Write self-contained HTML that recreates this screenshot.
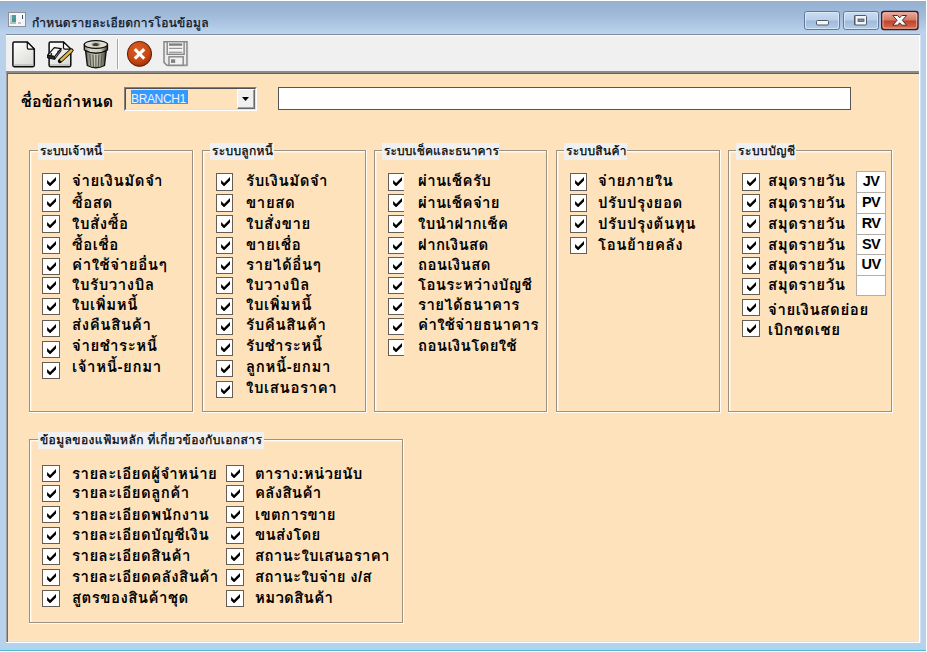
<!DOCTYPE html>
<html lang="th"><head><meta charset="utf-8"><title>กำหนดรายละเอียดการโอนข้อมูล</title>
<style>
html,body{margin:0;padding:0;}
body{width:927px;height:652px;overflow:hidden;background:#fff;position:relative;font-family:'Liberation Sans','Loma','Garuda','Waree','Noto Sans Thai UI','Noto Sans Thai','Tahoma','Leelawadee UI',sans-serif;color:#000;}
.abs{position:absolute;}
#frame{left:0;top:1px;width:926px;height:650px;background:linear-gradient(#b9d1ea 0,#b9d1ea 642px,#b9d1ea 644px,#a4d8f2 648px,#8fe0f8 649px,#52b6cf 649px,#52b6cf 650px);}
#tbar{left:0;top:1px;width:926px;height:33px;background:linear-gradient(#99aec9 0,#96b2d3 9%,#a1bbda 45%,#aec6e3 70%,#b6d0ea 90%,#bed4ec 100%);}
#title{left:32px;top:13px;font-size:12px;line-height:20px;white-space:nowrap;color:#0a1020;letter-spacing:.25px;-webkit-text-stroke:.25px #0a1020;}
#tool{left:6px;top:35px;width:914px;height:36px;background:#f0f0f0;box-shadow:inset 0 1px 0 #fbfbfb;}
#tline0{left:6px;top:34px;width:914px;height:1px;background:#7f8ea3;}
#tline1{left:6px;top:71px;width:914px;height:2px;background:#8c8c8c;}
#tline2{left:7px;top:73px;width:912px;height:1px;background:#6a5f52;}
#content{left:8px;top:74px;width:911px;height:567px;background:#fde2bc;}
#cl1{left:6px;top:73px;width:1px;height:570px;background:#a0a0a0;}
#cl2{left:7px;top:74px;width:1px;height:568px;background:#6e6a64;}
#cr0{left:918px;top:74px;width:1px;height:568px;background:#eee4d4;}
#cr{left:919px;top:35px;width:1px;height:608px;background:#fff;}
#cr2{left:920px;top:35px;width:1px;height:608px;background:#d3e2f3;}
#cb0{left:8px;top:640px;width:910px;height:1px;background:#f3e4cb;}
#cb{left:8px;top:641px;width:911px;height:1px;background:#e9e0d2;}
#cb2{left:6px;top:642px;width:914px;height:1px;background:#fff;}
#cyan{left:0;top:650px;width:926px;height:1px;background:#52b6cf;}
.grp{box-sizing:border-box;border:1px solid #fffdf6;border-width:0 1px 1px 0;}
.grp:before{content:'';position:absolute;left:0;top:0;right:0;bottom:0;border:1px solid #9c9080;box-shadow:inset 1px 1px 0 #fffdf6,inset 2px 2px 0 #feecd4;}
.gt{background:#f0f0f0;font-size:12px;line-height:17px;height:17px;white-space:nowrap;padding:0 0 0 2px;box-sizing:border-box;overflow:hidden;-webkit-text-stroke:.25px #000;}
.cb{box-sizing:border-box;border:1px solid #665e54;background:#fff;}
.cb .ck{position:absolute;left:4px;top:3px;}
.lb{font-weight:bold;font-size:15px;line-height:22px;height:22px;white-space:nowrap;letter-spacing:.6px;}
.tx{background:#fff;border:1px solid #555;box-sizing:border-box;}
.jv{background:#fff;border:1px solid #b4aea4;box-sizing:border-box;font-weight:bold;font-size:14.500px;letter-spacing:-.6px;text-align:center;}
</style></head>
<body>
<div id="frame" class="abs"></div>
<div id="tbar" class="abs"></div>
<svg class="abs" style="left:8px;top:12px" width="18" height="15" viewBox="0 0 18 15">
<rect x="0.5" y="0.5" width="17" height="14" fill="#f4f6f8" stroke="#8a9098"/>
<rect x="2" y="3" width="2" height="9" fill="#c8d0d4"/>
<rect x="4" y="3" width="4" height="4" fill="#4e9aa6"/>
<rect x="4" y="7" width="4" height="3" fill="#3f9f7c"/>
<rect x="2" y="10" width="6" height="2" fill="#b9bdbd"/>
<rect x="10" y="10" width="3" height="2" fill="#c4c4c0"/>
<rect x="14" y="3" width="1" height="4" fill="#3a4a6a"/>
</svg>
<div id="title" class="abs">กำหนดรายละเอียดการโอนข้อมูล</div>
<svg class="abs" style="left:800px;top:8px" width="122" height="25" viewBox="0 0 122 25">
<defs>
<linearGradient id="gb" x1="0" y1="0" x2="0" y2="1"><stop offset="0" stop-color="#cbddf2"/><stop offset=".48" stop-color="#b9d0ea"/><stop offset=".52" stop-color="#9dbbdc"/><stop offset="1" stop-color="#b4cdea"/></linearGradient>
<linearGradient id="gr" x1="0" y1="0" x2="0" y2="1"><stop offset="0" stop-color="#eab0a2"/><stop offset=".48" stop-color="#d77863"/><stop offset=".52" stop-color="#c0402a"/><stop offset="1" stop-color="#d67352"/></linearGradient>
</defs>
<rect x="4.500" y="3.500" width="35" height="18" rx="2.200" fill="url(#gb)" stroke="#62799a"/>
<rect x="5.500" y="4.500" width="33" height="16" rx="2" fill="none" stroke="#e4eef9" stroke-opacity=".7"/>
<rect x="16.500" y="12.500" width="12" height="4.500" rx="1" fill="#f4f6f9" stroke="#4f5a6b"/>
<rect x="43.500" y="3.500" width="35" height="18" rx="2.200" fill="url(#gb)" stroke="#62799a"/>
<rect x="44.500" y="4.500" width="33" height="16" rx="2" fill="none" stroke="#e4eef9" stroke-opacity=".7"/>
<rect x="54.500" y="7.500" width="12" height="9.500" rx="1" fill="#f4f6f9" stroke="#4f5a6b"/>
<rect x="54" y="7.500" width="1.500" height="9.500" fill="#4f5a6b"/>
<rect x="58" y="11" width="6" height="2.500" fill="#7f8da3" stroke="#4f5a6b" stroke-width=".8"/>
<rect x="81.700" y="3.500" width="36.300" height="18" rx="2.200" fill="url(#gr)" stroke="#3e1716" stroke-width="1.300"/>
<rect x="83" y="4.800" width="33.700" height="15.400" rx="2" fill="none" stroke="#f6c6bb" stroke-opacity=".75"/>
<path d="M92.800 7.500 L97.600 7.500 L99.700 9.800 L101.800 7.500 L106.600 7.500 L102.300 12.300 L106.600 17.200 L101.800 17.200 L99.700 14.800 L97.600 17.200 L92.800 17.200 L97.100 12.300 Z" fill="#fafafa" stroke="#4a3030" stroke-width="1" stroke-linejoin="round"/>
</svg>
<div id="tline0" class="abs"></div>
<div id="tool" class="abs"></div>
<svg class="abs" style="left:11px;top:39.500px" width="26" height="29" viewBox="0 0 26 29">
<defs><linearGradient id="gd" x1="0" y1="0" x2=".7" y2="1"><stop offset="0" stop-color="#ffffff"/><stop offset="1" stop-color="#dcdcd8"/></linearGradient></defs>
<path d="M1.900 3.500 Q1.900 2.100 3.300 2.100 L16.300 2.100 L23.300 9.100 L23.300 25.300 Q23.300 26.700 21.900 26.700 L3.300 26.700 Q1.900 26.700 1.900 25.300 Z" fill="url(#gd)" stroke="#0c0c0c" stroke-width="1.500" stroke-linejoin="round"/>
<path d="M2.800 24.300 H22.400 V25.800 H2.800 Z" fill="#b9b9b6"/>
<path d="M16.300 2.100 L16.300 7.700 Q16.300 9.100 17.700 9.100 L23.300 9.100 Z" fill="#fbfbfb" stroke="#0c0c0c" stroke-width="1.200" stroke-linejoin="round"/>
</svg>
<svg class="abs" style="left:46px;top:39.500px" width="30" height="29" viewBox="0 0 30 29">
<path d="M3.100 3.500 Q3.100 2.100 4.500 2.100 L17.500 2.100 L24.800 9.100 L24.800 25.300 Q24.800 26.700 23.400 26.700 L4.500 26.700 Q3.100 26.700 3.100 25.300 Z" fill="url(#gd)" stroke="#0c0c0c" stroke-width="1.500" stroke-linejoin="round"/>
<path d="M4 24.300 H23.900 V25.800 H4 Z" fill="#b9b9b6"/>
<path d="M17.500 2.100 L17.500 7.700 Q17.500 9.100 18.900 9.100 L24.800 9.100 Z" fill="#fbfbfb" stroke="#0c0c0c" stroke-width="1.200" stroke-linejoin="round"/>
<path d="M1.600 15.200 L8.300 7.700 L15 8.700 L8.700 16.600 Z" fill="#f6f6f6" stroke="#0c0c0c" stroke-width="1.200" stroke-linejoin="round"/>
<path d="M1.600 15.200 L8.700 16.600 L8.700 19.300 L1.600 18 Z" fill="#2a2a2a" stroke="#0c0c0c" stroke-width="1" stroke-linejoin="round"/>
<path d="M8.700 16.600 L15 8.700 L15 11 L8.700 19.300 Z" fill="#8c8c8c" stroke="#0c0c0c" stroke-width="1" stroke-linejoin="round"/>
<circle cx="5.300" cy="14" r=".9" fill="#111"/><circle cx="12.300" cy="11.300" r=".9" fill="#111"/>
<path d="M14 21 L25.400 10.500" stroke="#0c0c0c" stroke-width="4.400" stroke-linecap="round"/>
<path d="M15.200 20 L25.400 10.500" stroke="#dfb645" stroke-width="2.400" stroke-linecap="round"/>
<circle cx="13.600" cy="21.500" r="1.100" fill="#0c0c0c"/>
</svg>
<svg class="abs" style="left:82.500px;top:39px" width="28" height="30" viewBox="0 0 28 30">
<defs><linearGradient id="gt" x1="0" y1="0" x2="1" y2="0"><stop offset="0" stop-color="#4e4e46"/><stop offset=".2" stop-color="#a9a99b"/><stop offset=".5" stop-color="#d0d0c0"/><stop offset=".8" stop-color="#8d8d80"/><stop offset="1" stop-color="#2c2c28"/></linearGradient>
<linearGradient id="gl" x1="0" y1="0" x2="1" y2="0"><stop offset="0" stop-color="#8a8a7c"/><stop offset=".25" stop-color="#d9d9cb"/><stop offset=".7" stop-color="#cdcdbd"/><stop offset="1" stop-color="#3a3a34"/></linearGradient></defs>
<path d="M2.600 12 L4.300 26.500 Q12.900 31 21.500 26.500 L23.200 12 Z" fill="url(#gt)" stroke="#0e0e0c" stroke-width="1.300" stroke-linejoin="round"/>
<g stroke="#5c5c52" stroke-width="1.200"><path d="M6.800 15 L7.800 27.500"/><path d="M9.900 15.500 L10.500 28.300"/><path d="M12.900 15.800 L12.900 28.600"/><path d="M15.900 15.500 L15.300 28.300"/><path d="M19 15 L18 27.500"/></g>
<path d="M1.300 5.500 L1.300 11 Q12.900 17.500 24.500 11 L24.500 5.500 Z" fill="url(#gl)" stroke="#0e0e0c" stroke-width="1.300" stroke-linejoin="round"/>
<ellipse cx="12.900" cy="5.500" rx="11.600" ry="3.900" fill="#dedfd1" stroke="#0e0e0c" stroke-width="1.200"/>
<ellipse cx="12.900" cy="5.400" rx="4.600" ry="2.100" fill="#b3b3a4"/>
<ellipse cx="12.600" cy="5.600" rx="3" ry="1.500" fill="#3c3c34"/>
</svg>
<div class="abs" style="left:117px;top:39px;width:1px;height:30px;background:#a8a8a8"></div><div class="abs" style="left:118px;top:39px;width:1px;height:30px;background:#fff"></div>
<svg class="abs" style="left:126px;top:40px" width="28" height="28" viewBox="0 0 28 28">
<defs><radialGradient id="gx" cx=".42" cy=".32" r=".75"><stop offset="0" stop-color="#dd5f22"/><stop offset=".65" stop-color="#c64612"/><stop offset="1" stop-color="#8a2a0a"/></radialGradient></defs>
<ellipse cx="13.500" cy="13.900" rx="12.100" ry="12.500" fill="url(#gx)" stroke="#5e1c08" stroke-width="1"/>
<path d="M9.900 10.300 L17.100 17.500 M17.100 10.300 L9.900 17.500" stroke="#fff" stroke-width="3.100" stroke-linecap="square"/>
</svg>
<svg class="abs" style="left:163px;top:40px" width="26" height="27" viewBox="0 0 26 27">
<path d="M1 1.700 L24 1.700 L24 25.200 L3.800 25.200 L1 22.400 Z" fill="#ececec" stroke="#868686" stroke-width="1.500" stroke-linejoin="miter"/>
<path d="M24.600 2.500 V25.800 H4.500" fill="none" stroke="#a6a6a6" stroke-width="1"/>
<rect x="4.200" y="1.700" width="16.900" height="12.600" fill="#f4f4f4" stroke="#868686" stroke-width="1.400"/>
<rect x="6" y="3.400" width="13.200" height="2.400" fill="#808080"/>
<rect x="6" y="7.800" width="13.200" height="1.100" fill="#8c8c8c"/>
<rect x="6" y="11.700" width="13.200" height="1.100" fill="#8c8c8c"/>
<rect x="6" y="16.800" width="14.200" height="8.400" fill="#f2f2f2" stroke="#868686" stroke-width="1.400"/>
<rect x="8" y="19.300" width="4.200" height="3.600" fill="#808080"/>
</svg>
<div id="tline1" class="abs"></div><div id="tline2" class="abs"></div>
<div id="content" class="abs"></div>
<div id="cl1" class="abs"></div><div id="cl2" class="abs"></div><div id="cr" class="abs"></div><div id="cb0" class="abs"></div><div id="cb" class="abs"></div><div id="cb2" class="abs"></div><div id="cr2" class="abs"></div><div id="cr0" class="abs"></div><div id="cyan" class="abs"></div>
<div class="abs lb" style="left:21px;top:91px;font-size:16px;letter-spacing:.1px">ชื่อข้อกำหนด</div>
<div class="abs" style="left:124px;top:87px;width:133px;height:24px;box-sizing:border-box;border:1px solid;border-color:#808080 #fff #fff #808080;"></div>
<div class="abs" style="left:125px;top:88px;width:131px;height:22px;box-sizing:border-box;border:1px solid;border-color:#505050 #ece2d2 #ece2d2 #505050;"></div>
<div class="abs" style="left:131px;top:90px;width:57px;height:14px;background:#3399ff;color:#eaf3ff;font-size:12px;line-height:19px;white-space:nowrap;letter-spacing:-.35px;overflow:hidden;">BRANCH1</div>
<div class="abs" style="left:237px;top:89px;width:18px;height:20px;box-sizing:border-box;background:#f0f0f0;border:1px solid;border-color:#fff #696969 #696969 #fff;box-shadow:inset -1px -1px 0 #a0a0a0;"></div>
<svg class="abs" style="left:242px;top:97px" width="8" height="5" viewBox="0 0 8 5"><path d="M0 0 H7 L3.500 4 Z" fill="#000"/></svg>
<div class="abs tx" style="left:278px;top:87px;width:573px;height:23px"></div>
<div class="abs grp" style="left:29px;top:150px;width:165px;height:263px"></div>
<div class="abs gt" style="left:38px;top:143px;width:66px;letter-spacing:0px">ระบบเจ้าหนี้</div>
<div class="abs grp" style="left:202px;top:150px;width:165px;height:263px"></div>
<div class="abs gt" style="left:210px;top:143px;width:64px;letter-spacing:0.3px">ระบบลูกหนี้</div>
<div class="abs grp" style="left:374px;top:150px;width:174px;height:263px"></div>
<div class="abs gt" style="left:382px;top:143px;width:117px;letter-spacing:0.1px">ระบบเช็คและธนาคาร</div>
<div class="abs grp" style="left:556px;top:150px;width:165px;height:263px"></div>
<div class="abs gt" style="left:564px;top:143px;width:63px;letter-spacing:0.3px">ระบบสินค้า</div>
<div class="abs grp" style="left:728px;top:150px;width:165px;height:263px"></div>
<div class="abs gt" style="left:736px;top:143px;width:60px;letter-spacing:0.5px">ระบบบัญชี</div>
<div class="abs grp" style="left:29px;top:439px;width:375px;height:185px"></div>
<div class="abs gt" style="left:38px;top:432px;width:226px;letter-spacing:0.4px">ข้อมูลของแฟ้มหลัก ที่เกี่ยวข้องกับเอกสาร</div>
<div class="abs cb" style="left:42px;top:173px;width:18px;height:18px;"><svg class="ck" width="9.200" height="9" viewBox="0 0 7 7"><path d="M0 2.300 L2.300 4.600 L7 0 L7 2.700 L2.300 7.300 L0 5 Z" fill="#000"/></svg></div>
<div class="abs lb" style="left:72px;top:170px;">จ่ายเงินมัดจำ</div>
<div class="abs cb" style="left:42px;top:194px;width:18px;height:18px;"><svg class="ck" width="9.200" height="9" viewBox="0 0 7 7"><path d="M0 2.300 L2.300 4.600 L7 0 L7 2.700 L2.300 7.300 L0 5 Z" fill="#000"/></svg></div>
<div class="abs lb" style="left:72px;top:192px;">ซื้อสด</div>
<div class="abs cb" style="left:42px;top:215px;width:18px;height:18px;"><svg class="ck" width="9.200" height="9" viewBox="0 0 7 7"><path d="M0 2.300 L2.300 4.600 L7 0 L7 2.700 L2.300 7.300 L0 5 Z" fill="#000"/></svg></div>
<div class="abs lb" style="left:72px;top:213px;">ใบสั่งซื้อ</div>
<div class="abs cb" style="left:42px;top:237px;width:18px;height:17px;"><svg class="ck" width="9.200" height="9" viewBox="0 0 7 7"><path d="M0 2.300 L2.300 4.600 L7 0 L7 2.700 L2.300 7.300 L0 5 Z" fill="#000"/></svg></div>
<div class="abs lb" style="left:72px;top:234px;">ซื้อเชื่อ</div>
<div class="abs cb" style="left:42px;top:258px;width:18px;height:17px;"><svg class="ck" width="9.200" height="9" viewBox="0 0 7 7"><path d="M0 2.300 L2.300 4.600 L7 0 L7 2.700 L2.300 7.300 L0 5 Z" fill="#000"/></svg></div>
<div class="abs lb" style="left:72px;top:254px;">ค่าใช้จ่ายอื่นๆ</div>
<div class="abs cb" style="left:42px;top:277px;width:18px;height:17px;"><svg class="ck" width="9.200" height="9" viewBox="0 0 7 7"><path d="M0 2.300 L2.300 4.600 L7 0 L7 2.700 L2.300 7.300 L0 5 Z" fill="#000"/></svg></div>
<div class="abs lb" style="left:72px;top:274px;">ใบรับวางบิล</div>
<div class="abs cb" style="left:42px;top:298px;width:18px;height:17px;"><svg class="ck" width="9.200" height="9" viewBox="0 0 7 7"><path d="M0 2.300 L2.300 4.600 L7 0 L7 2.700 L2.300 7.300 L0 5 Z" fill="#000"/></svg></div>
<div class="abs lb" style="left:72px;top:294px;">ใบเพิ่มหนี้</div>
<div class="abs cb" style="left:42px;top:320px;width:18px;height:17px;"><svg class="ck" width="9.200" height="9" viewBox="0 0 7 7"><path d="M0 2.300 L2.300 4.600 L7 0 L7 2.700 L2.300 7.300 L0 5 Z" fill="#000"/></svg></div>
<div class="abs lb" style="left:72px;top:314px;">ส่งคืนสินค้า</div>
<div class="abs cb" style="left:42px;top:341px;width:18px;height:17px;"><svg class="ck" width="9.200" height="9" viewBox="0 0 7 7"><path d="M0 2.300 L2.300 4.600 L7 0 L7 2.700 L2.300 7.300 L0 5 Z" fill="#000"/></svg></div>
<div class="abs lb" style="left:72px;top:335px;">จ่ายชำระหนี้</div>
<div class="abs cb" style="left:42px;top:362px;width:18px;height:17px;"><svg class="ck" width="9.200" height="9" viewBox="0 0 7 7"><path d="M0 2.300 L2.300 4.600 L7 0 L7 2.700 L2.300 7.300 L0 5 Z" fill="#000"/></svg></div>
<div class="abs lb" style="left:72px;top:356px;">เจ้าหนี้-ยกมา</div>
<div class="abs cb" style="left:216px;top:173px;width:17px;height:18px;"><svg class="ck" width="9.200" height="9" viewBox="0 0 7 7"><path d="M0 2.300 L2.300 4.600 L7 0 L7 2.700 L2.300 7.300 L0 5 Z" fill="#000"/></svg></div>
<div class="abs lb" style="left:246px;top:170px;">รับเงินมัดจำ</div>
<div class="abs cb" style="left:216px;top:194px;width:17px;height:18px;"><svg class="ck" width="9.200" height="9" viewBox="0 0 7 7"><path d="M0 2.300 L2.300 4.600 L7 0 L7 2.700 L2.300 7.300 L0 5 Z" fill="#000"/></svg></div>
<div class="abs lb" style="left:246px;top:192px;">ขายสด</div>
<div class="abs cb" style="left:216px;top:215px;width:17px;height:18px;"><svg class="ck" width="9.200" height="9" viewBox="0 0 7 7"><path d="M0 2.300 L2.300 4.600 L7 0 L7 2.700 L2.300 7.300 L0 5 Z" fill="#000"/></svg></div>
<div class="abs lb" style="left:246px;top:213px;">ใบสั่งขาย</div>
<div class="abs cb" style="left:216px;top:237px;width:17px;height:17px;"><svg class="ck" width="9.200" height="9" viewBox="0 0 7 7"><path d="M0 2.300 L2.300 4.600 L7 0 L7 2.700 L2.300 7.300 L0 5 Z" fill="#000"/></svg></div>
<div class="abs lb" style="left:246px;top:234px;">ขายเชื่อ</div>
<div class="abs cb" style="left:216px;top:257px;width:17px;height:17px;"><svg class="ck" width="9.200" height="9" viewBox="0 0 7 7"><path d="M0 2.300 L2.300 4.600 L7 0 L7 2.700 L2.300 7.300 L0 5 Z" fill="#000"/></svg></div>
<div class="abs lb" style="left:246px;top:254px;">รายได้อื่นๆ</div>
<div class="abs cb" style="left:216px;top:277px;width:17px;height:17px;"><svg class="ck" width="9.200" height="9" viewBox="0 0 7 7"><path d="M0 2.300 L2.300 4.600 L7 0 L7 2.700 L2.300 7.300 L0 5 Z" fill="#000"/></svg></div>
<div class="abs lb" style="left:246px;top:274px;">ใบวางบิล</div>
<div class="abs cb" style="left:216px;top:298px;width:17px;height:17px;"><svg class="ck" width="9.200" height="9" viewBox="0 0 7 7"><path d="M0 2.300 L2.300 4.600 L7 0 L7 2.700 L2.300 7.300 L0 5 Z" fill="#000"/></svg></div>
<div class="abs lb" style="left:246px;top:294px;">ใบเพิ่มหนี้</div>
<div class="abs cb" style="left:216px;top:318px;width:17px;height:17px;"><svg class="ck" width="9.200" height="9" viewBox="0 0 7 7"><path d="M0 2.300 L2.300 4.600 L7 0 L7 2.700 L2.300 7.300 L0 5 Z" fill="#000"/></svg></div>
<div class="abs lb" style="left:246px;top:314px;">รับคืนสินค้า</div>
<div class="abs cb" style="left:216px;top:339px;width:17px;height:17px;"><svg class="ck" width="9.200" height="9" viewBox="0 0 7 7"><path d="M0 2.300 L2.300 4.600 L7 0 L7 2.700 L2.300 7.300 L0 5 Z" fill="#000"/></svg></div>
<div class="abs lb" style="left:246px;top:335px;">รับชำระหนี้</div>
<div class="abs cb" style="left:216px;top:360px;width:17px;height:17px;"><svg class="ck" width="9.200" height="9" viewBox="0 0 7 7"><path d="M0 2.300 L2.300 4.600 L7 0 L7 2.700 L2.300 7.300 L0 5 Z" fill="#000"/></svg></div>
<div class="abs lb" style="left:246px;top:356px;">ลูกหนี้-ยกมา</div>
<div class="abs cb" style="left:216px;top:381px;width:17px;height:17px;"><svg class="ck" width="9.200" height="9" viewBox="0 0 7 7"><path d="M0 2.300 L2.300 4.600 L7 0 L7 2.700 L2.300 7.300 L0 5 Z" fill="#000"/></svg></div>
<div class="abs lb" style="left:246px;top:377px;">ใบเสนอราคา</div>
<div class="abs cb" style="left:388px;top:173px;width:16px;height:18px;border-right:none;"><svg class="ck" width="9.200" height="9" viewBox="0 0 7 7"><path d="M0 2.300 L2.300 4.600 L7 0 L7 2.700 L2.300 7.300 L0 5 Z" fill="#000"/></svg></div>
<div class="abs lb" style="left:418px;top:170px;letter-spacing:.35px">ผ่านเช็ครับ</div>
<div class="abs cb" style="left:388px;top:194px;width:16px;height:18px;border-right:none;"><svg class="ck" width="9.200" height="9" viewBox="0 0 7 7"><path d="M0 2.300 L2.300 4.600 L7 0 L7 2.700 L2.300 7.300 L0 5 Z" fill="#000"/></svg></div>
<div class="abs lb" style="left:418px;top:192px;letter-spacing:.35px">ผ่านเช็คจ่าย</div>
<div class="abs cb" style="left:388px;top:215px;width:16px;height:18px;border-right:none;"><svg class="ck" width="9.200" height="9" viewBox="0 0 7 7"><path d="M0 2.300 L2.300 4.600 L7 0 L7 2.700 L2.300 7.300 L0 5 Z" fill="#000"/></svg></div>
<div class="abs lb" style="left:418px;top:213px;letter-spacing:.35px">ใบนำฝากเช็ค</div>
<div class="abs cb" style="left:388px;top:237px;width:16px;height:17px;border-right:none;"><svg class="ck" width="9.200" height="9" viewBox="0 0 7 7"><path d="M0 2.300 L2.300 4.600 L7 0 L7 2.700 L2.300 7.300 L0 5 Z" fill="#000"/></svg></div>
<div class="abs lb" style="left:418px;top:234px;letter-spacing:.35px">ฝากเงินสด</div>
<div class="abs cb" style="left:388px;top:257px;width:16px;height:17px;border-right:none;"><svg class="ck" width="9.200" height="9" viewBox="0 0 7 7"><path d="M0 2.300 L2.300 4.600 L7 0 L7 2.700 L2.300 7.300 L0 5 Z" fill="#000"/></svg></div>
<div class="abs lb" style="left:418px;top:254px;letter-spacing:.35px">ถอนเงินสด</div>
<div class="abs cb" style="left:388px;top:277px;width:16px;height:17px;border-right:none;"><svg class="ck" width="9.200" height="9" viewBox="0 0 7 7"><path d="M0 2.300 L2.300 4.600 L7 0 L7 2.700 L2.300 7.300 L0 5 Z" fill="#000"/></svg></div>
<div class="abs lb" style="left:418px;top:274px;letter-spacing:.35px">โอนระหว่างบัญชี</div>
<div class="abs cb" style="left:388px;top:298px;width:16px;height:17px;border-right:none;"><svg class="ck" width="9.200" height="9" viewBox="0 0 7 7"><path d="M0 2.300 L2.300 4.600 L7 0 L7 2.700 L2.300 7.300 L0 5 Z" fill="#000"/></svg></div>
<div class="abs lb" style="left:418px;top:294px;letter-spacing:.35px">รายได้ธนาคาร</div>
<div class="abs cb" style="left:388px;top:318px;width:16px;height:17px;border-right:none;"><svg class="ck" width="9.200" height="9" viewBox="0 0 7 7"><path d="M0 2.300 L2.300 4.600 L7 0 L7 2.700 L2.300 7.300 L0 5 Z" fill="#000"/></svg></div>
<div class="abs lb" style="left:418px;top:314px;letter-spacing:.35px">ค่าใช้จ่ายธนาคาร</div>
<div class="abs cb" style="left:388px;top:339px;width:16px;height:17px;border-right:none;"><svg class="ck" width="9.200" height="9" viewBox="0 0 7 7"><path d="M0 2.300 L2.300 4.600 L7 0 L7 2.700 L2.300 7.300 L0 5 Z" fill="#000"/></svg></div>
<div class="abs lb" style="left:418px;top:335px;letter-spacing:.35px">ถอนเงินโดยใช้</div>
<div class="abs cb" style="left:570px;top:173px;width:17px;height:18px;"><svg class="ck" width="9.200" height="9" viewBox="0 0 7 7"><path d="M0 2.300 L2.300 4.600 L7 0 L7 2.700 L2.300 7.300 L0 5 Z" fill="#000"/></svg></div>
<div class="abs lb" style="left:598px;top:170px;">จ่ายภายใน</div>
<div class="abs cb" style="left:570px;top:194px;width:17px;height:18px;"><svg class="ck" width="9.200" height="9" viewBox="0 0 7 7"><path d="M0 2.300 L2.300 4.600 L7 0 L7 2.700 L2.300 7.300 L0 5 Z" fill="#000"/></svg></div>
<div class="abs lb" style="left:598px;top:192px;">ปรับปรุงยอด</div>
<div class="abs cb" style="left:570px;top:215px;width:17px;height:18px;"><svg class="ck" width="9.200" height="9" viewBox="0 0 7 7"><path d="M0 2.300 L2.300 4.600 L7 0 L7 2.700 L2.300 7.300 L0 5 Z" fill="#000"/></svg></div>
<div class="abs lb" style="left:598px;top:213px;">ปรับปรุงต้นทุน</div>
<div class="abs cb" style="left:570px;top:237px;width:17px;height:17px;"><svg class="ck" width="9.200" height="9" viewBox="0 0 7 7"><path d="M0 2.300 L2.300 4.600 L7 0 L7 2.700 L2.300 7.300 L0 5 Z" fill="#000"/></svg></div>
<div class="abs lb" style="left:598px;top:234px;">โอนย้ายคลัง</div>
<div class="abs cb" style="left:742px;top:173px;width:18px;height:18px;"><svg class="ck" width="9.200" height="9" viewBox="0 0 7 7"><path d="M0 2.300 L2.300 4.600 L7 0 L7 2.700 L2.300 7.300 L0 5 Z" fill="#000"/></svg></div>
<div class="abs lb" style="left:768px;top:170px;">สมุดรายวัน</div>
<div class="abs cb" style="left:742px;top:194px;width:18px;height:18px;"><svg class="ck" width="9.200" height="9" viewBox="0 0 7 7"><path d="M0 2.300 L2.300 4.600 L7 0 L7 2.700 L2.300 7.300 L0 5 Z" fill="#000"/></svg></div>
<div class="abs lb" style="left:768px;top:192px;">สมุดรายวัน</div>
<div class="abs cb" style="left:742px;top:215px;width:18px;height:18px;"><svg class="ck" width="9.200" height="9" viewBox="0 0 7 7"><path d="M0 2.300 L2.300 4.600 L7 0 L7 2.700 L2.300 7.300 L0 5 Z" fill="#000"/></svg></div>
<div class="abs lb" style="left:768px;top:213px;">สมุดรายวัน</div>
<div class="abs cb" style="left:742px;top:237px;width:18px;height:17px;"><svg class="ck" width="9.200" height="9" viewBox="0 0 7 7"><path d="M0 2.300 L2.300 4.600 L7 0 L7 2.700 L2.300 7.300 L0 5 Z" fill="#000"/></svg></div>
<div class="abs lb" style="left:768px;top:234px;">สมุดรายวัน</div>
<div class="abs cb" style="left:742px;top:257px;width:18px;height:17px;"><svg class="ck" width="9.200" height="9" viewBox="0 0 7 7"><path d="M0 2.300 L2.300 4.600 L7 0 L7 2.700 L2.300 7.300 L0 5 Z" fill="#000"/></svg></div>
<div class="abs lb" style="left:768px;top:254px;">สมุดรายวัน</div>
<div class="abs cb" style="left:742px;top:278px;width:18px;height:17px;"><svg class="ck" width="9.200" height="9" viewBox="0 0 7 7"><path d="M0 2.300 L2.300 4.600 L7 0 L7 2.700 L2.300 7.300 L0 5 Z" fill="#000"/></svg></div>
<div class="abs lb" style="left:768px;top:274px;">สมุดรายวัน</div>
<div class="abs cb" style="left:742px;top:299px;width:18px;height:17px;"><svg class="ck" width="9.200" height="9" viewBox="0 0 7 7"><path d="M0 2.300 L2.300 4.600 L7 0 L7 2.700 L2.300 7.300 L0 5 Z" fill="#000"/></svg></div>
<div class="abs lb" style="left:768px;top:299px;">จ่ายเงินสดย่อย</div>
<div class="abs cb" style="left:742px;top:320px;width:18px;height:17px;"><svg class="ck" width="9.200" height="9" viewBox="0 0 7 7"><path d="M0 2.300 L2.300 4.600 L7 0 L7 2.700 L2.300 7.300 L0 5 Z" fill="#000"/></svg></div>
<div class="abs lb" style="left:768px;top:319px;">เบิกชดเชย</div>
<div class="abs jv" style="left:856px;top:171px;width:30px;height:22px;line-height:19px">JV</div>
<div class="abs jv" style="left:856px;top:192px;width:30px;height:22px;line-height:19px">PV</div>
<div class="abs jv" style="left:856px;top:213px;width:30px;height:22px;line-height:19px">RV</div>
<div class="abs jv" style="left:856px;top:234px;width:30px;height:21px;line-height:18px">SV</div>
<div class="abs jv" style="left:856px;top:254px;width:30px;height:22px;line-height:19px">UV</div>
<div class="abs jv" style="left:856px;top:275px;width:30px;height:21px;line-height:18px"></div>
<div class="abs cb" style="left:42px;top:465px;width:18px;height:17px;"><svg class="ck" width="9.200" height="9" viewBox="0 0 7 7"><path d="M0 2.300 L2.300 4.600 L7 0 L7 2.700 L2.300 7.300 L0 5 Z" fill="#000"/></svg></div>
<div class="abs lb" style="left:72px;top:463px;letter-spacing:.45px">รายละเอียดผู้จำหน่าย</div>
<div class="abs cb" style="left:42px;top:485px;width:18px;height:17px;"><svg class="ck" width="9.200" height="9" viewBox="0 0 7 7"><path d="M0 2.300 L2.300 4.600 L7 0 L7 2.700 L2.300 7.300 L0 5 Z" fill="#000"/></svg></div>
<div class="abs lb" style="left:72px;top:482px;letter-spacing:.45px">รายละเอียดลูกค้า</div>
<div class="abs cb" style="left:42px;top:506px;width:18px;height:17px;"><svg class="ck" width="9.200" height="9" viewBox="0 0 7 7"><path d="M0 2.300 L2.300 4.600 L7 0 L7 2.700 L2.300 7.300 L0 5 Z" fill="#000"/></svg></div>
<div class="abs lb" style="left:72px;top:504px;letter-spacing:.45px">รายละเอียดพนักงาน</div>
<div class="abs cb" style="left:42px;top:527px;width:18px;height:17px;"><svg class="ck" width="9.200" height="9" viewBox="0 0 7 7"><path d="M0 2.300 L2.300 4.600 L7 0 L7 2.700 L2.300 7.300 L0 5 Z" fill="#000"/></svg></div>
<div class="abs lb" style="left:72px;top:524px;letter-spacing:.45px">รายละเอียดบัญชีเงิน</div>
<div class="abs cb" style="left:42px;top:548px;width:18px;height:17px;"><svg class="ck" width="9.200" height="9" viewBox="0 0 7 7"><path d="M0 2.300 L2.300 4.600 L7 0 L7 2.700 L2.300 7.300 L0 5 Z" fill="#000"/></svg></div>
<div class="abs lb" style="left:72px;top:545px;letter-spacing:.45px">รายละเอียดสินค้า</div>
<div class="abs cb" style="left:42px;top:569px;width:18px;height:17px;"><svg class="ck" width="9.200" height="9" viewBox="0 0 7 7"><path d="M0 2.300 L2.300 4.600 L7 0 L7 2.700 L2.300 7.300 L0 5 Z" fill="#000"/></svg></div>
<div class="abs lb" style="left:72px;top:566px;letter-spacing:.45px">รายละเอียดคลังสินค้า</div>
<div class="abs cb" style="left:42px;top:590px;width:18px;height:17px;"><svg class="ck" width="9.200" height="9" viewBox="0 0 7 7"><path d="M0 2.300 L2.300 4.600 L7 0 L7 2.700 L2.300 7.300 L0 5 Z" fill="#000"/></svg></div>
<div class="abs lb" style="left:72px;top:587px;letter-spacing:.45px">สูตรของสินค้าชุด</div>
<div class="abs cb" style="left:226px;top:465px;width:18px;height:17px;"><svg class="ck" width="9.200" height="9" viewBox="0 0 7 7"><path d="M0 2.300 L2.300 4.600 L7 0 L7 2.700 L2.300 7.300 L0 5 Z" fill="#000"/></svg></div>
<div class="abs lb" style="left:255px;top:463px;letter-spacing:.3px">ตาราง:หน่วยนับ</div>
<div class="abs cb" style="left:226px;top:485px;width:18px;height:17px;"><svg class="ck" width="9.200" height="9" viewBox="0 0 7 7"><path d="M0 2.300 L2.300 4.600 L7 0 L7 2.700 L2.300 7.300 L0 5 Z" fill="#000"/></svg></div>
<div class="abs lb" style="left:255px;top:482px;letter-spacing:.3px">คลังสินค้า</div>
<div class="abs cb" style="left:226px;top:506px;width:18px;height:17px;"><svg class="ck" width="9.200" height="9" viewBox="0 0 7 7"><path d="M0 2.300 L2.300 4.600 L7 0 L7 2.700 L2.300 7.300 L0 5 Z" fill="#000"/></svg></div>
<div class="abs lb" style="left:255px;top:504px;letter-spacing:.3px">เขตการขาย</div>
<div class="abs cb" style="left:226px;top:527px;width:18px;height:17px;"><svg class="ck" width="9.200" height="9" viewBox="0 0 7 7"><path d="M0 2.300 L2.300 4.600 L7 0 L7 2.700 L2.300 7.300 L0 5 Z" fill="#000"/></svg></div>
<div class="abs lb" style="left:255px;top:524px;letter-spacing:.3px">ขนส่งโดย</div>
<div class="abs cb" style="left:226px;top:548px;width:18px;height:17px;"><svg class="ck" width="9.200" height="9" viewBox="0 0 7 7"><path d="M0 2.300 L2.300 4.600 L7 0 L7 2.700 L2.300 7.300 L0 5 Z" fill="#000"/></svg></div>
<div class="abs lb" style="left:255px;top:545px;letter-spacing:.3px">สถานะใบเสนอราคา</div>
<div class="abs cb" style="left:226px;top:569px;width:18px;height:17px;"><svg class="ck" width="9.200" height="9" viewBox="0 0 7 7"><path d="M0 2.300 L2.300 4.600 L7 0 L7 2.700 L2.300 7.300 L0 5 Z" fill="#000"/></svg></div>
<div class="abs lb" style="left:255px;top:566px;letter-spacing:.3px">สถานะใบจ่าย ง/ส</div>
<div class="abs cb" style="left:226px;top:590px;width:18px;height:17px;"><svg class="ck" width="9.200" height="9" viewBox="0 0 7 7"><path d="M0 2.300 L2.300 4.600 L7 0 L7 2.700 L2.300 7.300 L0 5 Z" fill="#000"/></svg></div>
<div class="abs lb" style="left:255px;top:587px;letter-spacing:.3px">หมวดสินค้า</div>
</body></html>
